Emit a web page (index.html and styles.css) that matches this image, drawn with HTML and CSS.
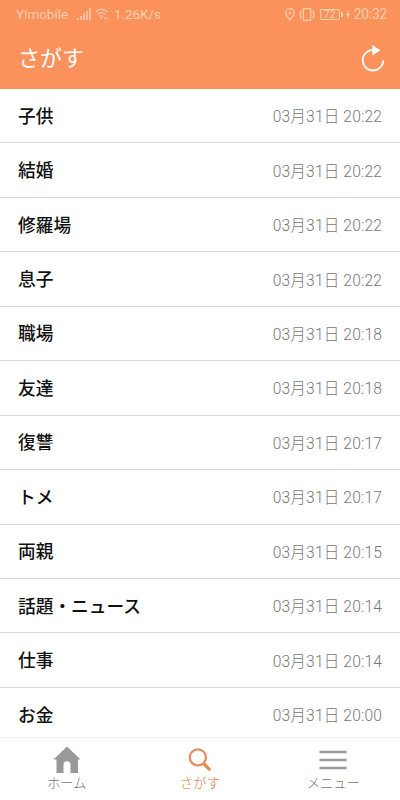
FILE: index.html
```
<!DOCTYPE html>
<html lang="ja">
<head>
  <meta charset="UTF-8">
  <meta name="viewport" content="width=device-width, initial-scale=1.0">
  <title>さがす</title>
  <link rel="stylesheet" href="styles.css">
</head>
<body>
  <div class="app">
    <header class="header">
      <div class="status">
        <div class="status-left">
          <span class="carrier">Y!mobile</span>
          <svg class="signal" width="14" height="12" viewBox="0 0 14 12">
            <path d="M1 10v2M4 8v4M7 5.5V12M10 3v9M13 0v12" stroke="currentColor" stroke-width="1.5"/>
          </svg>
          <svg class="wifi" width="14" height="12" viewBox="0 0 14 12" fill="none" stroke="currentColor" stroke-width="1.2">
            <path d="M.7 3.8Q6.5-1 12.3 3.8M2.7 6.2q3.8-3 7.6 0M4.5 8.5q2-1.5 4 0"/>
            <circle cx="6.5" cy="10.3" r=".9" fill="currentColor" stroke="none"/>
            <path d="M9.8 9v2.5M12 9v2.5" stroke-width=".9"/>
          </svg>
          <span class="speed">1.26K/s</span>
        </div>
        <div class="status-right">
          <svg class="pin" width="10" height="13" viewBox="0 0 10 13" fill="none" stroke="currentColor" stroke-width="1.2">
            <path d="M5 11.9C3.8 10.1.7 7.7.7 4.9a4.3 4.3 0 0 1 8.6 0C9.3 7.7 6.2 10.1 5 11.9z"/>
            <circle cx="5" cy="4.9" r="1.3" fill="currentColor" stroke="none"/>
          </svg>
          <svg class="vibrate" width="16" height="13" viewBox="0 0 16 13" fill="none" stroke="currentColor" stroke-width="1.2">
            <rect x="4.2" y=".7" width="7.6" height="11.6" rx=".8"/>
            <path d="M1.8 2v2l-.8 1 .8 1.5-.8 1.5.8 1v2M14.2 2v2l.8 1-.8 1.5.8 1.5-.8 1v2"/>
          </svg>
          <span class="battery">72</span>
          <svg class="bolt" width="4" height="9" viewBox="0 0 4 9" fill="currentColor"><path d="M2.7 0 0 5h1.5L1.2 9 4 3.9H2.5z"/></svg>
          <span class="clock">20:32</span>
        </div>
      </div>
      <div class="title-bar">
        <h1>さがす</h1>
        <svg class="reload" width="24" height="28" viewBox="0 0 24 28">
          <path d="M12 4.9A10.3 10.3 0 1 0 22.3 15.5" fill="none" stroke="#fff" stroke-width="1.8"/>
          <path d="M11.3 0v10.4L19.4 5.2z" fill="#fff"/>
        </svg>
      </div>
    </header>

    <ul class="list">
      <li><span class="name">子供</span><time>03月31日 20:22</time></li>
      <li><span class="name">結婚</span><time>03月31日 20:22</time></li>
      <li><span class="name">修羅場</span><time>03月31日 20:22</time></li>
      <li><span class="name">息子</span><time>03月31日 20:22</time></li>
      <li><span class="name">職場</span><time>03月31日 20:18</time></li>
      <li><span class="name">友達</span><time>03月31日 20:18</time></li>
      <li><span class="name">復讐</span><time>03月31日 20:17</time></li>
      <li><span class="name">トメ</span><time>03月31日 20:17</time></li>
      <li><span class="name">両親</span><time>03月31日 20:15</time></li>
      <li><span class="name">話題・ニュース</span><time>03月31日 20:14</time></li>
      <li><span class="name">仕事</span><time>03月31日 20:14</time></li>
      <li><span class="name">お金</span><time>03月31日 20:00</time></li>
    </ul>

    <nav class="tabs">
      <a class="tab">
        <svg width="28" height="28" viewBox="0 0 28 28"><path d="M14 .5 27.5 13.5H25V27h-7.5v-8.2a3.5 3.5 0 0 0-7 0V27H3.5V13.5H.5z" fill="#999"/></svg>
        <span>ホーム</span>
      </a>
      <a class="tab active">
        <svg width="28" height="28" viewBox="0 0 28 28" fill="none" stroke="#e58c5e"><circle cx="11.9" cy="11.4" r="8.1" stroke-width="2.2"/><path d="m17.5 17.3 6.6 6.9" stroke-width="3.3"/></svg>
        <span>さがす</span>
      </a>
      <a class="tab">
        <svg width="28" height="28" viewBox="0 0 28 28"><path d="M.5 6h27M.5 14h27M.5 22h27" stroke="#999" stroke-width="2.6"/></svg>
        <span>メニュー</span>
      </a>
    </nav>
  </div>
</body>
</html>
```
FILE: styles.css
```
* {
  margin: 0;
  padding: 0;
  box-sizing: border-box;
}

body {
  background: #fff;
  font-family: Roboto, "Noto Sans CJK JP", sans-serif;
}

.app {
  display: flex;
  flex-direction: column;
  height: 800px;
  overflow: hidden;
}

.header {
  flex: none;
  height: 89px;
  background: #fb915b;
  color: #fff;
}

.status {
  display: flex;
  justify-content: space-between;
  height: 28px;
  padding: 0 13px 0 16px;
  color: #ffd0b0;
  font-size: 13.4px;
}

.status-left,
.status-right {
  display: flex;
  align-items: center;
}

.signal {
  margin-left: 9px;
}

.wifi {
  margin: 0 5px 0 4px;
}

.vibrate {
  margin: 0 5px 0 4px;
}

.battery {
  position: relative;
  width: 20px;
  height: 11px;
  border: 1px solid currentColor;
  border-radius: 1px;
  font-size: 10px;
  line-height: 9px;
  text-align: center;
}

.battery::after {
  content: '';
  position: absolute;
  top: 2px;
  right: -4px;
  width: 2px;
  height: 5px;
  background: currentColor;
}

.bolt {
  margin: 0 4px 0 6px;
}

.clock {
  font-size: 13.8px;
  letter-spacing: -0.2px;
}

.title-bar {
  display: flex;
  justify-content: space-between;
  align-items: center;
  height: 61px;
  padding: 0 15px 0 18px;
}

h1 {
  padding-bottom: 6px;
  font-size: 22px;
  font-weight: normal;
}

.list {
  flex: 1;
  overflow: hidden;
  list-style: none;
}

.list li {
  display: flex;
  justify-content: space-between;
  align-items: center;
  height: 54.45px;
  padding: 0 18px;
  border-bottom: 1px solid #d8d8d8;
}

.name {
  padding-bottom: 2px;
  color: #111;
  font-size: 17.7px;
  font-weight: 500;
}

time {
  padding-bottom: 1px;
  color: #777;
  font-size: 15.6px;
  font-weight: 300;
  letter-spacing: 0.15px;
}

.tabs {
  flex: none;
  display: flex;
  height: 63px;
  border-top: 1px solid #eee;
}

.tab {
  flex: 1;
  display: flex;
  flex-direction: column;
  align-items: center;
  padding-top: 8px;
  color: #777;
  font-size: 13.3px;
  font-weight: 300;
  line-height: 20px;
}

.tab.active {
  color: #e07c4a;
}
```
